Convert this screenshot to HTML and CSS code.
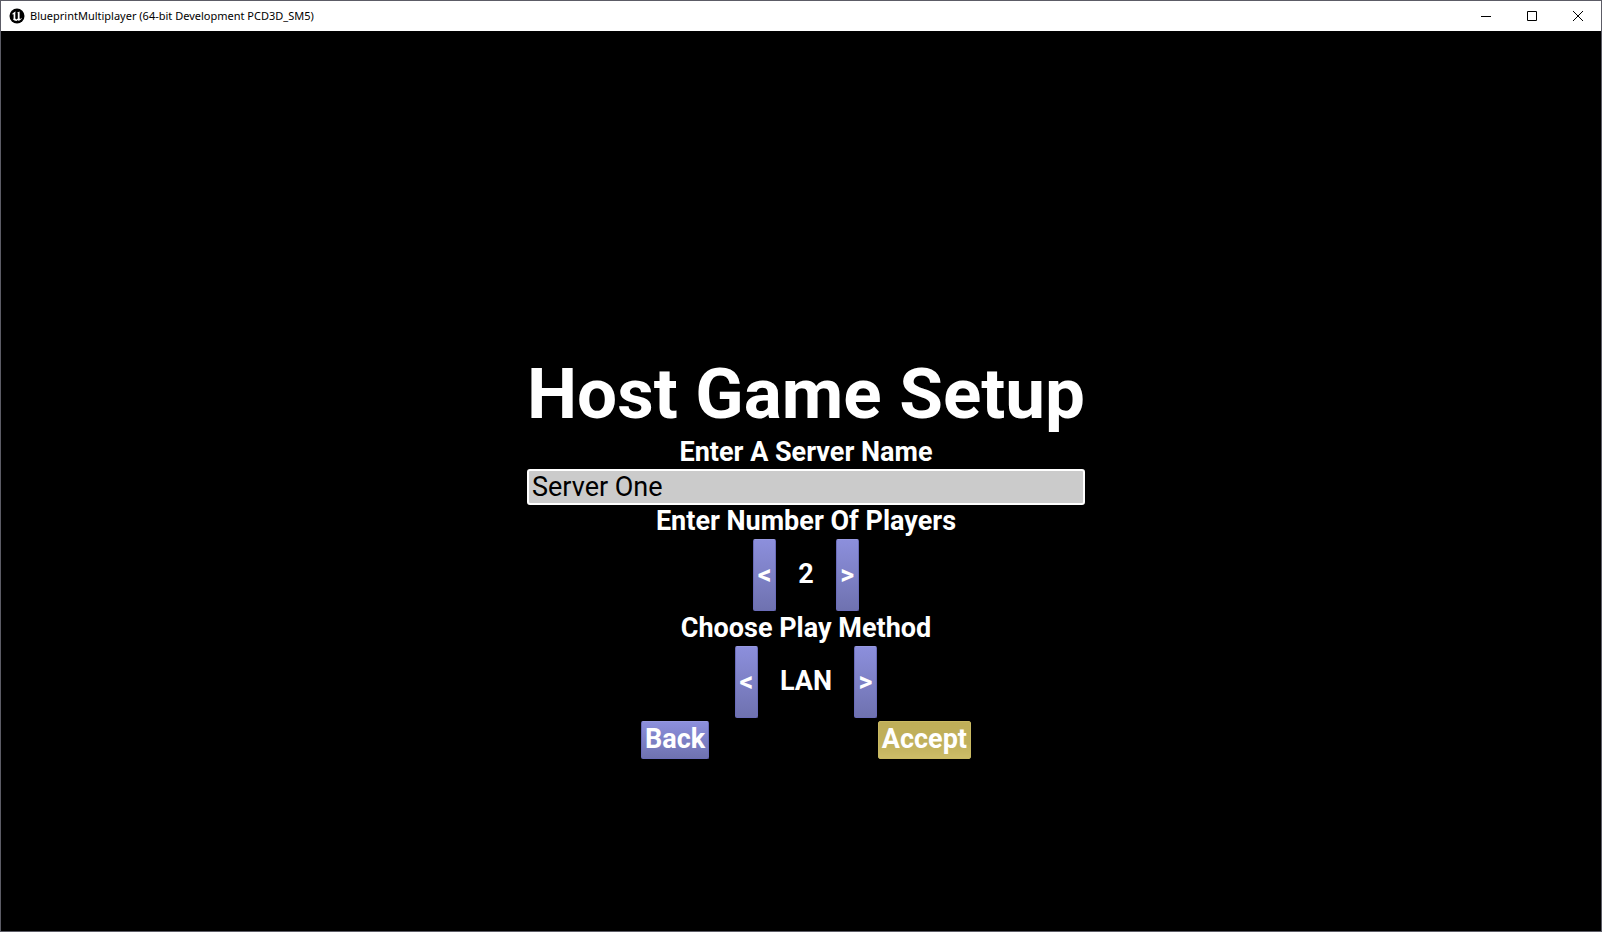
FILE: index.html
```html
<!DOCTYPE html>
<html lang="en">
<head>
<meta charset="utf-8">
<title>BlueprintMultiplayer</title>
<link rel="stylesheet" href="styles.css">
</head>
<body>
<div class="window">
  <header class="titlebar">
    <svg class="logo" viewBox="0 0 16 16" aria-hidden="true">
      <circle cx="8" cy="8" r="7.5" fill="#000"/>
      <path d="M2.8 6.6C3.8 5 5 4.2 6.8 3.6L6.3 4.7V10.6L7.4 11.4L8.8 10.6V5.3L8.2 4.6L10.6 3.4V10.5L11.2 11L13 9.8C12.2 11.6 11.2 12.3 9.8 12.9L8.9 12L7.5 13C5.9 12.8 4.9 12.2 4 11.2L4.6 10.6V6.4C4 6.1 3.4 6.2 2.8 6.6Z" fill="#fff"/>
    </svg>
    <span class="caption">BlueprintMultiplayer (64-bit Development PCD3D_SM5)</span>
    <div class="controls">
      <button class="control" type="button" aria-label="Minimize"><svg class="glyph" viewBox="0 0 10 10"><path d="M0 5.5H10"/></svg></button>
      <button class="control" type="button" aria-label="Maximize"><svg class="glyph" viewBox="0 0 10 10"><path d="M.5 .5H9.5V9.5H.5Z"/></svg></button>
      <button class="control" type="button" aria-label="Close"><svg class="glyph" viewBox="0 0 10 10"><path d="M0 0L10 10M10 0L0 10"/></svg></button>
    </div>
  </header>
  <main class="stage">
    <form class="setup">
      <h1 class="title">Host Game Setup</h1>
      <label class="label" for="server">Enter A Server Name</label>
      <input class="field" id="server" type="text" value="Server One">
      <span class="label" id="players">Enter Number Of Players</span>
      <div class="stepper" role="group" aria-labelledby="players">
        <button class="arrow" type="button" aria-label="Fewer players">&lt;</button>
        <output class="value">2</output>
        <button class="arrow" type="button" aria-label="More players">&gt;</button>
      </div>
      <span class="label" id="method">Choose Play Method</span>
      <div class="stepper" role="group" aria-labelledby="method">
        <button class="arrow" type="button" aria-label="Previous method">&lt;</button>
        <output class="value">LAN</output>
        <button class="arrow" type="button" aria-label="Next method">&gt;</button>
      </div>
      <div class="actions">
        <button class="action" type="button">Back</button>
        <button class="action accept" type="submit">Accept</button>
      </div>
    </form>
  </main>
</div>
</body>
</html>
```
FILE: styles.css
```css
* { box-sizing: border-box; }
body { margin: 0; background: #000; }
.window {
  display: flex;
  flex-direction: column;
  min-height: 100vh;
  border: 1px solid #5c5c66;
  background: #000;
}
.titlebar {
  display: flex;
  align-items: center;
  height: 30px;
  padding: 0 0 0 8px;
  background: #fff;
}
.logo { width: 16px; height: 16px; }
.caption {
  margin-left: 5px;
  font: 11px/16px "Noto Sans", sans-serif;
  color: #000;
  white-space: nowrap;
}
.controls { display: flex; margin-left: auto; }
.control {
  display: flex;
  align-items: center;
  justify-content: center;
  width: 46px;
  height: 30px;
  padding: 0;
  border: 0;
  background: none;
}
.glyph {
  width: 10px;
  height: 10px;
  fill: none;
  stroke: #000;
  stroke-width: 1;
}
.stage {
  display: flex;
  flex: 1;
  align-items: center;
  justify-content: center;
  padding: 149px 0 0 10px;
}
.setup {
  display: flex;
  flex-direction: column;
  align-items: center;
  color: #fff;
  font: bold 27px/34px Roboto, sans-serif;
}
.title { margin: 0; font-size: 71px; line-height: 84px; }
.label { line-height: 33px; }
.field {
  width: 100%;
  min-width: 558px;
  height: 36px;
  padding: 0 3px;
  border: 2px solid #fff;
  border-radius: 3px;
  background: #cbcbcb;
  color: #000;
  font: 27px/32px Roboto, sans-serif;
}
.stepper { display: flex; align-items: stretch; height: 74px; padding: 1px 0; }
.value { padding: 18px 22px; }
.arrow,
.action {
  border: 1px solid #6a6cb8;
  border-top-color: #9698e0;
  border-radius: 2px;
  background: linear-gradient(#8c8fdc, #6f72b0);
  color: #fff;
  font: inherit;
}
.arrow { width: 23px; padding: 0; }
.actions {
  display: flex;
  justify-content: space-between;
  width: 330px;
  padding: 2px 0 1px;
}
.action { height: 38px; padding: 0 3px 2px; }
.accept {
  border-color: #c9b962;
  background: linear-gradient(#bfae58, #c0b05c 60%, #cdbd68);
}
```
